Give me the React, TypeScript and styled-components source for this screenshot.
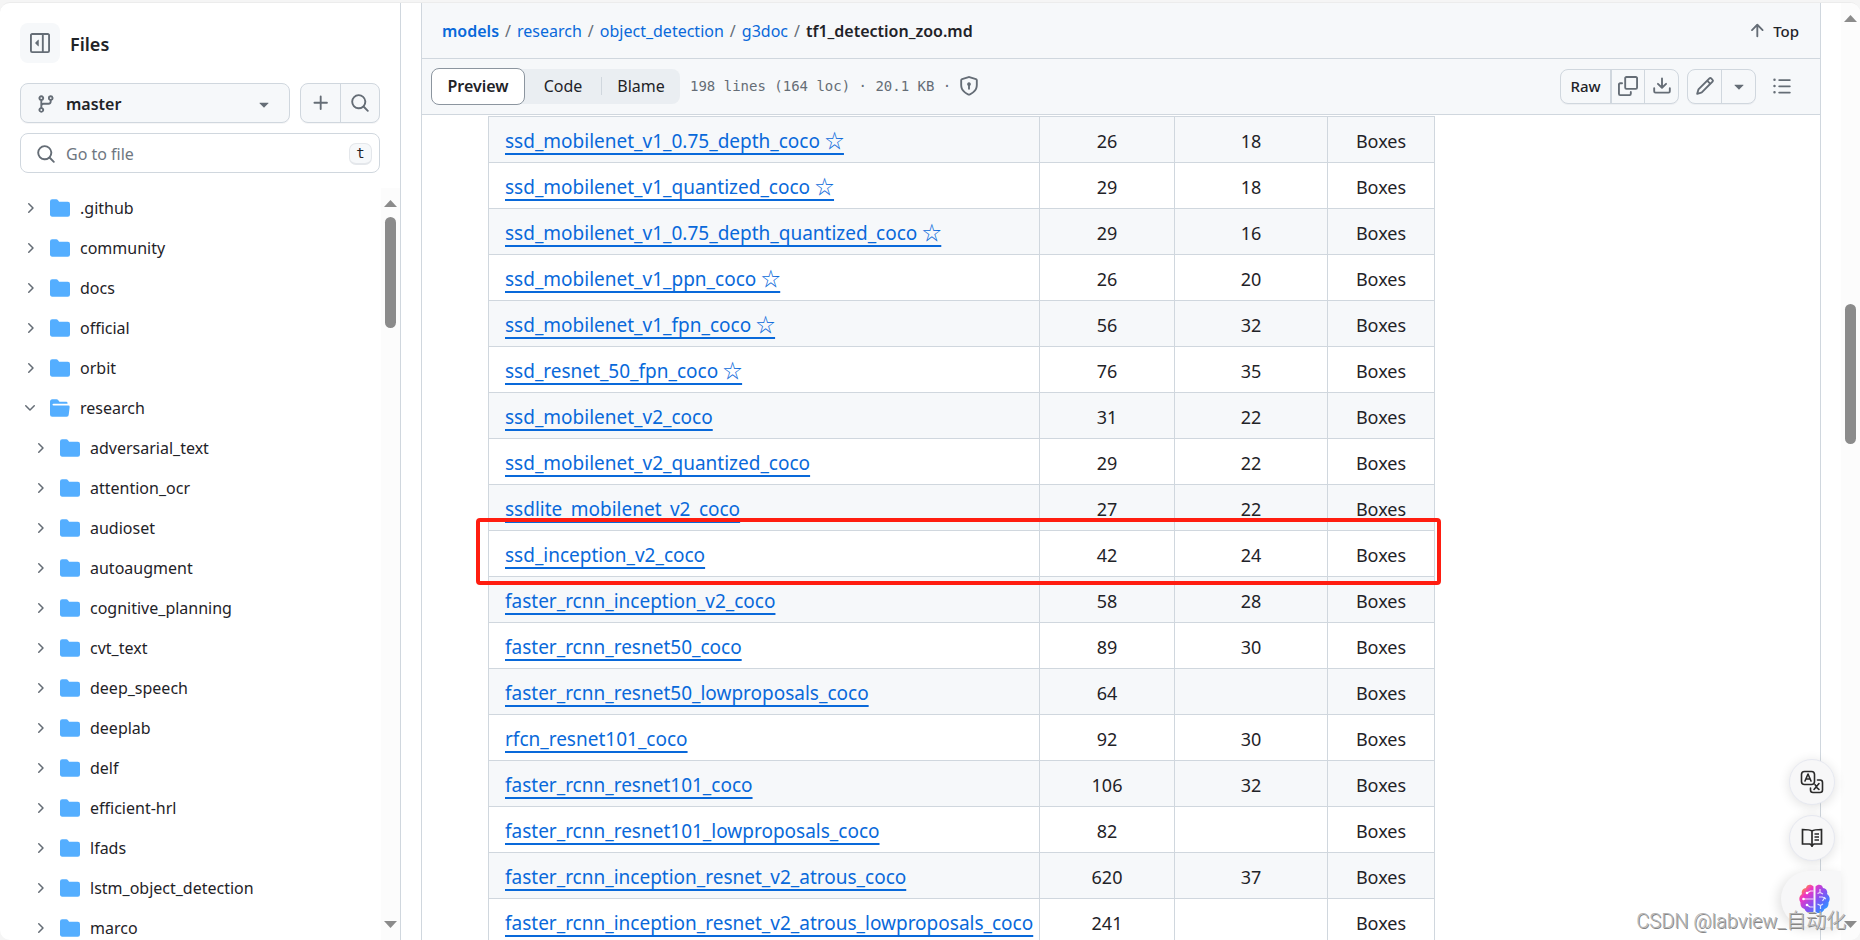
import React from 'react';
import styled, { createGlobalStyle, css } from 'styled-components';

const Global = createGlobalStyle`
  *, *::before, *::after { box-sizing: border-box; }
  body { margin: 0; background: #f5f5f5; color: #1f2328; font-family: "Noto Sans", "Noto Sans CJK SC", sans-serif; font-size: 16px; overflow: hidden; }
  button, input { font: inherit; color: inherit; margin: 0; }
  a { color: #0969da; text-decoration: none; }
`;

const Window = styled.div`
  height: 100vh;
  padding-top: 2px;
`;
const Page = styled.div`
  position: relative;
  display: flex;
  height: 100%;
  background: #fff;
  border-top: 1px solid #ececec;
  border-radius: 10px;
  overflow: hidden;
`;

/* Sidebar */
const Sidebar = styled.aside`
  flex: 0 0 401px;
  display: flex;
  flex-direction: column;
  border-right: 1px solid #d0d7de;
`;
const SideHead = styled.div`
  display: flex;
  align-items: center;
  gap: 10px;
  padding: 20px 20px 0;
`;
const PanelButton = styled.button`
  display: grid;
  place-items: center;
  width: 40px;
  height: 40px;
  border: 0;
  border-radius: 8px;
  background: #f6f8fa;
  color: #656d76;
  padding: 0;
`;
const SideTitle = styled.h2`
  margin: 0;
  font-size: 18px;
  line-height: 28px;
  font-weight: 600;
  padding-top: 2px;
`;
const Controls = styled.div`
  display: flex;
  gap: 10px;
  padding: 20px 20px 0;
`;
const BranchButton = styled.button`
  flex: 1;
  display: flex;
  align-items: center;
  gap: 10px;
  height: 40px;
  padding: 2px 15px 0;
  border: 1px solid #d0d7de;
  border-radius: 8px;
  background: #f6f8fa;
  box-shadow: 0 1px 0 rgba(31, 35, 40, 0.04);
  font-weight: 600;
  text-align: left;
  span { flex: 1; }
  svg { color: #656d76; }
`;
const Group = styled.div<{ $small?: boolean }>`
  display: flex;
  height: ${(p) => (p.$small ? 35 : 40)}px;
  border: 1px solid #d0d7de;
  border-radius: 8px;
  background: #f6f8fa;
  box-shadow: 0 1px 0 rgba(31, 35, 40, 0.04);
`;
const GroupButton = styled.button<{ $w: number }>`
  display: grid;
  place-items: center;
  width: ${(p) => p.$w}px;
  padding: 0;
  border: 0;
  background: none;
  color: #656d76;
  & + & { border-left: 1px solid #d0d7de; }
`;
const RawButton = styled(GroupButton)`
  color: #1f2328;
  font-size: 15px;
  font-weight: 500;
  border-right: 1px solid #d0d7de;
`;
const SearchBox = styled.label`
  display: flex;
  align-items: center;
  gap: 10px;
  height: 40px;
  margin: 10px 20px 15px;
  padding: 2px 7px 0 15px;
  border: 1px solid #d0d7de;
  border-radius: 8px;
  color: #656d76;
`;
const SearchInput = styled.input`
  flex: 1;
  min-width: 0;
  border: 0;
  padding: 0;
  outline: 0;
  background: none;
  &::placeholder { color: #6e7781; opacity: 1; }
`;
const Key = styled.kbd`
  width: 23px;
  height: 22px;
  border: 1px solid #e4e7eb;
  border-bottom-width: 2px;
  border-radius: 7px;
  background: #f6f8fa;
  color: #1f2328;
  font: 14px/18px "DejaVu Sans Mono", monospace;
  text-align: center;
`;
const TreeArea = styled.div`
  flex: 1;
  min-height: 0;
  display: flex;
`;
const Tree = styled.ul`
  flex: 1;
  margin: 0;
  padding: 0;
  list-style: none;
  overflow: hidden;
`;
const TreeItem = styled.li<{ $nested: boolean }>`
  display: flex;
  align-items: center;
  height: 40px;
  padding-left: ${(p) => (p.$nested ? 32 : 22)}px;
  svg.chevron { color: #656d76; margin-right: 12px; }
  svg.folder { color: #54aeff; margin-right: 10px; }
`;
const Scrollbar = styled.div`
  display: flex;
  flex-direction: column;
  align-items: center;
  flex: 0 0 19px;
  background: #fcfcfc;
  color: #8b8b8b;
`;
const Track = styled.div`
  flex: 1;
  position: relative;
  width: 11px;
`;
const Thumb = styled.div<{ $top: string; $size: string }>`
  position: absolute;
  left: 0;
  right: 0;
  top: ${(p) => p.$top};
  height: ${(p) => p.$size};
  border-radius: 6px;
  background: #8b8b8b;
`;
const ScrollArrow = styled.svg`
  flex: none;
  margin: 12px 0;
  &:first-child { margin-bottom: 10px; }
`;

/* File view */
const Main = styled.main`
  flex: 1;
  min-width: 0;
  display: flex;
  flex-direction: column;
  margin: 0 20px;
  border: solid #d0d7de;
  border-width: 0 1px;
`;
const Crumbs = styled.nav`
  display: flex;
  align-items: center;
  height: 56px;
  flex: none;
  padding: 0 21px 0 20px;
  background: #f6f8fa;
  border-bottom: 1px solid #d0d7de;
`;
const Crumb = styled.a<{ $bold?: boolean }>`
  font-weight: ${(p) => (p.$bold ? 600 : 400)};
`;
const Slash = styled.span`
  padding: 0 6px;
  color: #656d76;
`;
const Current = styled.strong`
  flex: 1;
  font-weight: 600;
`;
const TopButton = styled.button`
  display: flex;
  align-items: center;
  gap: 6px;
  border: 0;
  padding: 0;
  background: none;
  font-size: 15px;
  font-weight: 500;
  svg { color: #656d76; }
`;
const Toolbar = styled.div`
  display: flex;
  align-items: center;
  flex: none;
  height: 56px;
  padding: 0 21px 1px 9px;
  background: #f6f8fa;
  border-bottom: 1px solid #d0d7de;
`;
const Segments = styled.div`
  display: flex;
  align-items: center;
  height: 35px;
  border-radius: 8px;
  background: #eaeef2;
`;
const Segment = styled.button<{ $active?: boolean; $w: number }>`
  width: ${(p) => p.$w}px;
  height: 35px;
  padding: 0;
  border: 0;
  background: none;
  ${(p) =>
    p.$active &&
    css`
      height: 37px;
      border: 1px solid #8c959f;
      border-radius: 8px;
      background: #fff;
      font-weight: 600;
    `}
`;
const Divider = styled.span`
  width: 1px;
  height: 18px;
  background: #d0d7de;
`;
const Meta = styled.span`
  flex: 1;
  display: flex;
  align-items: center;
  gap: 8px;
  padding-left: 10px;
  color: #656d76;
  font: 14px/20px "DejaVu Sans Mono", monospace;
`;
const Actions = styled.div`
  display: flex;
  gap: 8px;
`;
const Body = styled.div`
  flex: 1;
  min-height: 0;
  overflow: hidden;
  padding: 1px 65px 0 66px;
`;
const Table = styled.table`
  width: 947px;
  max-width: 100%;
  table-layout: fixed;
  border-collapse: collapse;
  font-size: 18px;
  line-height: 28px;
`;
const Row = styled.tr`
  position: relative;
  &:nth-child(odd) { background: #f6f8fa; }
`;
const Cell = styled.td`
  height: 46px;
  padding: 2px 16px 0;
  border: 1px solid #d0d7de;
  text-align: center;
  white-space: nowrap;
  &:first-child { text-align: left; }
`;
const ModelLink = styled.a`
  font-size: 19px;
  text-decoration: underline;
  text-decoration-thickness: 2px;
  text-underline-offset: 5px;
`;
const Mark = styled.span`
  position: absolute;
  z-index: 1;
  inset: -13px -6px -8px -13px;
  border: 4px solid #ff1d10;
  border-radius: 4px;
  pointer-events: none;
`;

/* Floating helpers */
const Floating = styled.div`
  position: absolute;
  right: 19px;
  bottom: 13px;
  display: flex;
  flex-direction: column;
  align-items: flex-end;
  gap: 10px;
`;
const Round = styled.button`
  display: grid;
  place-items: center;
  width: 46px;
  height: 46px;
  margin-right: 6px;
  padding: 0;
  border: 1px solid #e6e8f0;
  border-radius: 50%;
  background: #f7f7f8;
  box-shadow: 0 2px 12px rgba(0, 0, 0, 0.12);
  color: #2a2a2a;
`;
const BrainButton = styled.button`
  display: grid;
  place-items: center start;
  width: 60px;
  height: 56px;
  padding: 0 0 0 18px;
  border: 0;
  border-radius: 28px 0 0 28px;
  background: #f7f7f8;
  box-shadow: -3px 2px 12px rgba(0, 0, 0, 0.12);
`;
const Watermark = styled.div`
  position: absolute;
  right: 14px;
  bottom: 5px;
  color: #b4b4b4;
  text-shadow: 1px 1px 0 #858585;
  font: 300 20px/28px Roboto, "Noto Sans CJK SC", sans-serif;
`;

const octicons = {
  chevronRight: 'M6.22 3.22a.75.75 0 0 1 1.06 0l4.25 4.25a.75.75 0 0 1 0 1.06l-4.25 4.25a.751.751 0 0 1-1.042-.018.751.751 0 0 1-.018-1.042L9.94 8 6.22 4.28a.75.75 0 0 1 0-1.06Z',
  chevronDown: 'M12.78 5.22a.749.749 0 0 1 0 1.06l-4.25 4.25a.749.749 0 0 1-1.06 0L3.22 6.28a.749.749 0 1 1 1.06-1.06L8 8.939l3.72-3.719a.749.749 0 0 1 1.06 0Z',
  folder: 'M1.75 1A1.75 1.75 0 0 0 0 2.75v10.5C0 14.216.784 15 1.75 15h12.5A1.75 1.75 0 0 0 16 13.25v-8.5A1.75 1.75 0 0 0 14.25 3H7.5a.25.25 0 0 1-.2-.1l-.9-1.2C6.07 1.26 5.55 1 5 1H1.75Z',
  folderOpen: 'M.513 1.513A1.75 1.75 0 0 1 1.75 1h3.5c.55 0 1.07.26 1.4.7l.9 1.2a.25.25 0 0 0 .2.1H13a1 1 0 0 1 1 1v.5H2.75a.75.75 0 0 0 0 1.5h11.978a1 1 0 0 1 .994 1.117L15 13.25A1.75 1.75 0 0 1 13.25 15H1.75A1.75 1.75 0 0 1 0 13.25V2.75c0-.464.184-.91.513-1.237Z',
  search: 'M10.68 11.74a6 6 0 0 1-7.922-8.982 6 6 0 0 1 8.982 7.922l3.04 3.04a.749.749 0 0 1-.326 1.275.749.749 0 0 1-.734-.215ZM11.5 7a4.499 4.499 0 1 0-8.997 0A4.499 4.499 0 0 0 11.5 7Z',
  plus: 'M7.75 2a.75.75 0 0 1 .75.75V7h4.25a.75.75 0 0 1 0 1.5H8.5v4.25a.75.75 0 0 1-1.5 0V8.5H2.75a.75.75 0 0 1 0-1.5H7V2.75A.75.75 0 0 1 7.75 2Z',
  branch: 'M9.5 3.25a2.25 2.25 0 1 1 3 2.122V6A2.5 2.5 0 0 1 10 8.5H6a1 1 0 0 0-1 1v1.128a2.251 2.251 0 1 1-1.5 0V5.372a2.25 2.25 0 1 1 1.5 0v1.836A2.493 2.493 0 0 1 6 7h4a1 1 0 0 0 1-1v-.628A2.25 2.25 0 0 1 9.5 3.25Zm-6 0a.75.75 0 1 0 1.5 0 .75.75 0 0 0-1.5 0Zm8.25-.75a.75.75 0 1 0 0 1.5.75.75 0 0 0 0-1.5ZM4.25 12a.75.75 0 1 0 0 1.5.75.75 0 0 0 0-1.5Z',
  triangle: 'm4.427 7.427 3.396 3.396a.25.25 0 0 0 .354 0l3.396-3.396A.25.25 0 0 0 11.396 7H4.604a.25.25 0 0 0-.177.427Z',
  sidebar: 'm4.177 7.823 2.396-2.396A.25.25 0 0 1 7 5.604v4.792a.25.25 0 0 1-.427.177L4.177 8.177a.25.25 0 0 1 0-.354ZM0 1.75C0 .784.784 0 1.75 0h12.5C15.216 0 16 .784 16 1.75v12.5A1.75 1.75 0 0 1 14.25 16H1.75A1.75 1.75 0 0 1 0 14.25Zm1.75-.25a.25.25 0 0 0-.25.25v12.5c0 .138.112.25.25.25H9.5v-13Zm12.5 13a.25.25 0 0 0 .25-.25V1.75a.25.25 0 0 0-.25-.25H11v13Z',
  arrowUp: 'M3.47 7.78a.75.75 0 0 1 0-1.06l4.25-4.25a.75.75 0 0 1 1.06 0l4.25 4.25a.751.751 0 0 1-.018 1.042.751.751 0 0 1-1.042.018L9 4.81v7.44a.75.75 0 0 1-1.5 0V4.81L4.53 7.78a.75.75 0 0 1-1.06 0Z',
  copy: 'M0 6.75C0 5.784.784 5 1.75 5h1.5a.75.75 0 0 1 0 1.5h-1.5a.25.25 0 0 0-.25.25v7.5c0 .138.112.25.25.25h7.5a.25.25 0 0 0 .25-.25v-1.5a.75.75 0 0 1 1.5 0v1.5A1.75 1.75 0 0 1 9.25 16h-7.5A1.75 1.75 0 0 1 0 14.25Z M5 1.75C5 .784 5.784 0 6.75 0h7.5C15.216 0 16 .784 16 1.75v7.5A1.75 1.75 0 0 1 14.25 11h-7.5A1.75 1.75 0 0 1 5 9.25Zm1.75-.25a.25.25 0 0 0-.25.25v7.5c0 .138.112.25.25.25h7.5a.25.25 0 0 0 .25-.25v-7.5a.25.25 0 0 0-.25-.25Z',
  download: 'M2.75 14A1.75 1.75 0 0 1 1 12.25v-2.5a.75.75 0 0 1 1.5 0v2.5c0 .138.112.25.25.25h10.5a.25.25 0 0 0 .25-.25v-2.5a.75.75 0 0 1 1.5 0v2.5A1.75 1.75 0 0 1 13.25 14Z M7.25 7.689V2a.75.75 0 0 1 1.5 0v5.689l1.97-1.969a.749.749 0 1 1 1.06 1.06l-3.25 3.25a.749.749 0 0 1-1.06 0L4.22 6.78a.749.749 0 1 1 1.06-1.06l1.97 1.969Z',
  pencil: 'M11.013 1.427a1.75 1.75 0 0 1 2.474 0l1.086 1.086a1.75 1.75 0 0 1 0 2.474l-8.61 8.61c-.21.21-.47.364-.756.445l-3.251.93a.75.75 0 0 1-.927-.928l.929-3.25c.081-.286.235-.547.445-.758l8.61-8.61Zm.176 4.823L9.75 4.81l-6.286 6.287a.253.253 0 0 0-.064.108l-.558 1.953 1.953-.558a.253.253 0 0 0 .108-.064Zm1.238-3.763a.25.25 0 0 0-.354 0L10.811 3.75l1.439 1.44 1.263-1.263a.25.25 0 0 0 0-.354Z',
  list: 'M5.75 2.5h8.5a.75.75 0 0 1 0 1.5h-8.5a.75.75 0 0 1 0-1.5Zm0 5h8.5a.75.75 0 0 1 0 1.5h-8.5a.75.75 0 0 1 0-1.5Zm0 5h8.5a.75.75 0 0 1 0 1.5h-8.5a.75.75 0 0 1 0-1.5ZM2 14a1 1 0 1 1 0-2 1 1 0 0 1 0 2Zm1-6a1 1 0 1 1-2 0 1 1 0 0 1 2 0ZM2 4a1 1 0 1 1 0-2 1 1 0 0 1 0 2Z',
  shield: 'm8.533.133 5.25 1.68A1.75 1.75 0 0 1 15 3.48V7c0 1.566-.32 3.182-1.303 4.682-.983 1.498-2.585 2.813-5.032 3.855a1.697 1.697 0 0 1-1.33 0c-2.447-1.042-4.049-2.357-5.032-3.855C1.32 10.182 1 8.566 1 7V3.48a1.75 1.75 0 0 1 1.217-1.667l5.25-1.68a1.748 1.748 0 0 1 1.066 0Zm-.61 1.429.001.001-5.25 1.68a.251.251 0 0 0-.174.237V7c0 1.36.275 2.666 1.057 3.859.784 1.194 2.121 2.342 4.366 3.298a.196.196 0 0 0 .154 0c2.245-.957 3.582-2.103 4.366-3.297C13.225 9.666 13.5 8.358 13.5 7V3.48a.25.25 0 0 0-.174-.238l-5.25-1.68a.25.25 0 0 0-.153 0ZM9.5 6.5c0 .536-.286 1.032-.75 1.3v2.45a.75.75 0 0 1-1.5 0V7.8A1.5 1.5 0 1 1 9.5 6.5Z',
};

function Icon({ name, size = 20, className }: { name: keyof typeof octicons; size?: number; className?: string }) {
  return (
    <svg className={className} width={size} height={size} viewBox="0 0 16 16" fill="currentColor" aria-hidden="true">
      <path fillRule="evenodd" d={octicons[name]} />
    </svg>
  );
}

function VScroll({ top, size }: { top: string; size: string }) {
  return (
    <Scrollbar aria-hidden="true">
      <ScrollArrow width="13" height="7" viewBox="0 0 13 7"><path d="M6.5 0 13 7H0Z" fill="currentColor" /></ScrollArrow>
      <Track><Thumb $top={top} $size={size} /></Track>
      <ScrollArrow width="13" height="7" viewBox="0 0 13 7"><path d="M6.5 7 13 0H0Z" fill="currentColor" /></ScrollArrow>
    </Scrollbar>
  );
}

const rootFolders = ['.github', 'community', 'docs', 'official', 'orbit', 'research'];
const researchFolders = ['adversarial_text', 'attention_ocr', 'audioset', 'autoaugment', 'cognitive_planning', 'cvt_text', 'deep_speech', 'deeplab', 'delf', 'efficient-hrl', 'lfads', 'lstm_object_detection', 'marco'];

const models: [string, string, string][] = [
  ['ssd_mobilenet_v1_0.75_depth_coco ☆', '26', '18'],
  ['ssd_mobilenet_v1_quantized_coco ☆', '29', '18'],
  ['ssd_mobilenet_v1_0.75_depth_quantized_coco ☆', '29', '16'],
  ['ssd_mobilenet_v1_ppn_coco ☆', '26', '20'],
  ['ssd_mobilenet_v1_fpn_coco ☆', '56', '32'],
  ['ssd_resnet_50_fpn_coco ☆', '76', '35'],
  ['ssd_mobilenet_v2_coco', '31', '22'],
  ['ssd_mobilenet_v2_quantized_coco', '29', '22'],
  ['ssdlite_mobilenet_v2_coco', '27', '22'],
  ['ssd_inception_v2_coco', '42', '24'],
  ['faster_rcnn_inception_v2_coco', '58', '28'],
  ['faster_rcnn_resnet50_coco', '89', '30'],
  ['faster_rcnn_resnet50_lowproposals_coco', '64', ''],
  ['rfcn_resnet101_coco', '92', '30'],
  ['faster_rcnn_resnet101_coco', '106', '32'],
  ['faster_rcnn_resnet101_lowproposals_coco', '82', ''],
  ['faster_rcnn_inception_resnet_v2_atrous_coco', '620', '37'],
  ['faster_rcnn_inception_resnet_v2_atrous_lowproposals_coco', '241', ''],
];
const marked = 'ssd_inception_v2_coco';

export default function App() {
  return (
    <Window>
      <Global />
      <Page>
        <Sidebar>
          <SideHead>
            <PanelButton aria-label="Collapse file tree"><Icon name="sidebar" /></PanelButton>
            <SideTitle>Files</SideTitle>
          </SideHead>
          <Controls>
            <BranchButton>
              <Icon name="branch" /><span>master</span><Icon name="triangle" />
            </BranchButton>
            <Group>
              <GroupButton $w={39} aria-label="Add file"><Icon name="plus" /></GroupButton>
              <GroupButton $w={39} aria-label="Search"><Icon name="search" /></GroupButton>
            </Group>
          </Controls>
          <SearchBox>
            <Icon name="search" />
            <SearchInput type="text" placeholder="Go to file" aria-label="Go to file" />
            <Key>t</Key>
          </SearchBox>
          <TreeArea>
            <Tree>
              {rootFolders.map((f) => (
                <TreeItem key={f} $nested={false}>
                  <Icon className="chevron" size={16} name={f === 'research' ? 'chevronDown' : 'chevronRight'} />
                  <Icon className="folder" name={f === 'research' ? 'folderOpen' : 'folder'} />
                  {f}
                </TreeItem>
              ))}
              {researchFolders.map((f) => (
                <TreeItem key={f} $nested>
                  <Icon className="chevron" size={16} name="chevronRight" />
                  <Icon className="folder" name="folder" />
                  {f}
                </TreeItem>
              ))}
            </Tree>
            <VScroll top="0" size="16%" />
          </TreeArea>
        </Sidebar>
        <Main>
          <Crumbs aria-label="Breadcrumb">
            <Crumb href="#" $bold>models</Crumb><Slash>/</Slash>
            <Crumb href="#">research</Crumb><Slash>/</Slash>
            <Crumb href="#">object_detection</Crumb><Slash>/</Slash>
            <Crumb href="#">g3doc</Crumb><Slash>/</Slash>
            <Current>tf1_detection_zoo.md</Current>
            <TopButton><Icon name="arrowUp" />Top</TopButton>
          </Crumbs>
          <Toolbar>
            <Segments>
              <Segment $active $w={94}>Preview</Segment>
              <Segment $w={76}>Code</Segment>
              <Divider />
              <Segment $w={78}>Blame</Segment>
            </Segments>
            <Meta>198 lines (164 loc) · 20.1 KB · <Icon name="shield" /></Meta>
            <Actions>
              <Group $small>
                <RawButton $w={50}>Raw</RawButton>
                <GroupButton as="button" $w={33} aria-label="Copy"><Icon name="copy" /></GroupButton>
                <GroupButton $w={34} aria-label="Download"><Icon name="download" /></GroupButton>
              </Group>
              <Group $small>
                <GroupButton $w={33} aria-label="Edit"><Icon name="pencil" /></GroupButton>
                <GroupButton $w={34} aria-label="More edit options"><Icon name="triangle" /></GroupButton>
              </Group>
              <GroupButton $w={35} aria-label="Outline"><Icon name="list" /></GroupButton>
            </Actions>
          </Toolbar>
          <Body>
            <Table>
              <colgroup><col /><col width="135" /><col width="153" /><col width="107" /></colgroup>
              <tbody>
                {models.map(([name, speed, map]) => (
                  <Row key={name}>
                    <Cell><ModelLink href="#">{name}</ModelLink>{name === marked && <Mark />}</Cell>
                    <Cell>{speed}</Cell>
                    <Cell>{map}</Cell>
                    <Cell>Boxes</Cell>
                  </Row>
                ))}
              </tbody>
            </Table>
          </Body>
        </Main>
        <VScroll top="31%" size="16%" />
        <Floating>
          <Round aria-label="Translate">
            <svg width="24" height="24" viewBox="0 0 24 24" fill="none" stroke="currentColor" strokeWidth="1.6" strokeLinecap="round" strokeLinejoin="round">
              <rect x="1.5" y="1.5" width="13" height="13" rx="3" />
              <path d="m5 11 3-7 3 7M6 9h4M17.500 10H20a2.500 2.500 0 0 1 2.500 2.500V20a2.500 2.500 0 0 1-2.500 2.500h-7A2.500 2.500 0 0 1 10.500 20v-2M14 19.500l5-6M15 14.500c1 2.500 2 4 4 5" />
            </svg>
          </Round>
          <Round aria-label="Reader">
            <svg width="22" height="22" viewBox="0 0 22 22" fill="none" stroke="currentColor" strokeWidth="1.700">
              <path d="M11 4C9 2.500 5 2.500 1.500 2.500V17H9l2 1.500L13 17h7.500V2.500C17 2.500 13 2.500 11 4Zm0 0v16M13.500 7H18M13.500 10H18M13.500 13H18" />
            </svg>
          </Round>
          <BrainButton aria-label="Assistant">
            <svg width="31" height="30" viewBox="0 0 31 30">
              <defs>
                <linearGradient id="brain" gradientUnits="userSpaceOnUse" x1="4" y1="2" x2="29" y2="26">
                  <stop offset="0" stopColor="#ff9a2e" /><stop offset=".22" stopColor="#f035c4" /><stop offset=".55" stopColor="#8a50f0" /><stop offset=".8" stopColor="#4a78ff" /><stop offset="1" stopColor="#2aa5ff" />
                </linearGradient>
              </defs>
              <path fill="url(#brain)" d="M14.500 2.500C12-.5 7.500.5 7 4 3.500 4.500 2 7.500 3 10c-3 2-3.500 6-1.500 8.500C1 22 3 24.500 5.500 25c1.500 4 6.500 5.500 9 2.500ZM16.500 2.500C19-.5 23.500.5 24 4c3.500.5 5 3.500 4 6 3 2 3.500 6 1.500 8.500.5 3.500-1.500 6-4 6.500-1.500 4-6.500 5.500-9 2.500Z" />
              <path fill="none" stroke="#fff" strokeOpacity=".8" strokeWidth="1.200" d="M14.500 7h-3L8 9M4 15h10.500M8 21l3 2h3.500M18.500 9.500 21 8.500V5M21 8.500 24 10M20 13h3.500l3.500 2M26 13l-2.500 4M18.500 20l3 1.500L24 20M21.500 21.500V25" />
              <circle cx="8" cy="9" r="1.300" fill="#fff" /><circle cx="4.500" cy="15" r="1.300" fill="#fff" /><circle cx="8" cy="21" r="1.300" fill="#fff" />
            </svg>
          </BrainButton>
        </Floating>
        <Watermark>CSDN @labview_自动化</Watermark>
      </Page>
    </Window>
  );
}
